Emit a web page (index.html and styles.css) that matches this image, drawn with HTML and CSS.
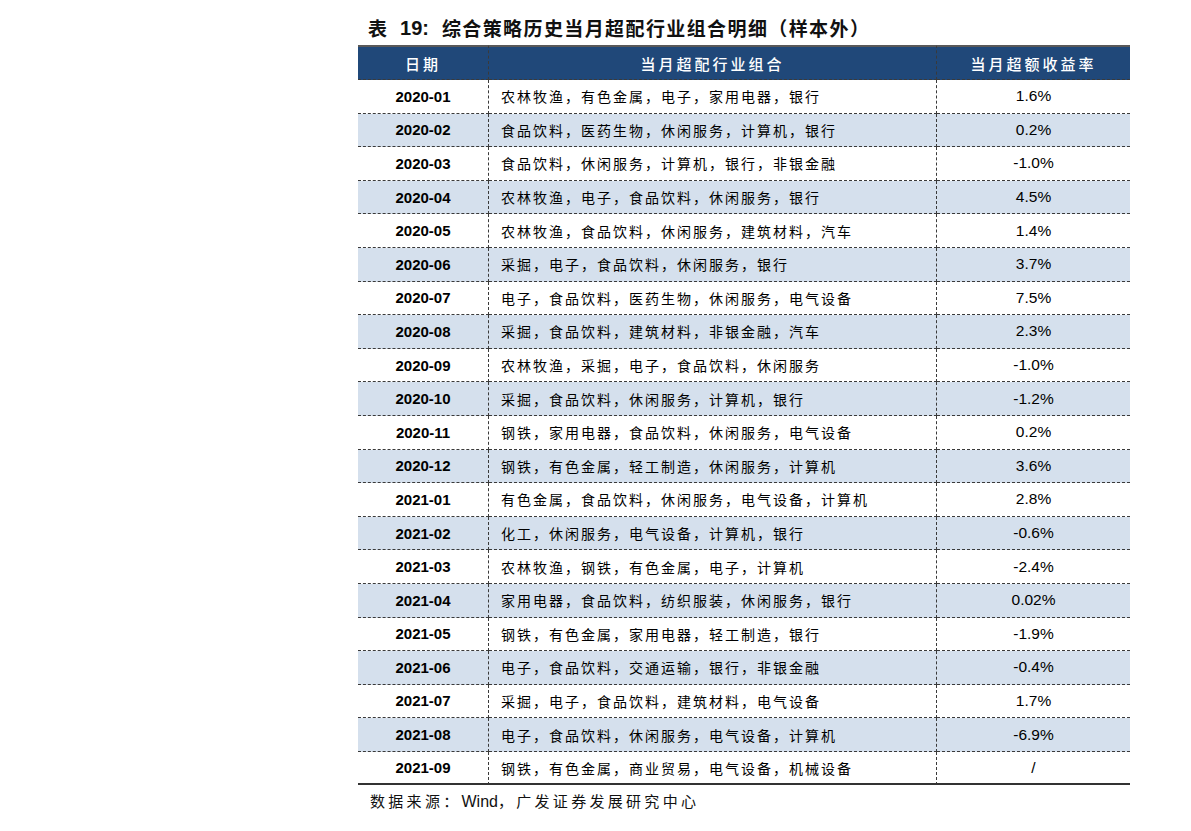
FILE: index.html
```html
<!DOCTYPE html>
<html lang="zh-CN">
<head>
<meta charset="utf-8">
<title>表 19</title>
<link rel="stylesheet" href="styles.css">
</head>
<body>
<div class="page">
  <div class="title"><span class="title-lead">表</span><span class="title-num">19:</span><span class="title-text">综合策略历史当月超配行业组合明细（样本外）</span></div>
  <table class="tbl">
    <thead>
      <tr>
        <th class="c-date">日期</th>
        <th class="c-combo">当月超配行业组合</th>
        <th class="c-ret">当月超额收益率</th>
      </tr>
    </thead>
    <tbody>
      <tr><td class="c-date">2020-01</td><td class="c-combo">农林牧渔，有色金属，电子，家用电器，银行</td><td class="c-ret">1.6%</td></tr>
      <tr><td class="c-date">2020-02</td><td class="c-combo">食品饮料，医药生物，休闲服务，计算机，银行</td><td class="c-ret">0.2%</td></tr>
      <tr><td class="c-date">2020-03</td><td class="c-combo">食品饮料，休闲服务，计算机，银行，非银金融</td><td class="c-ret">-1.0%</td></tr>
      <tr><td class="c-date">2020-04</td><td class="c-combo">农林牧渔，电子，食品饮料，休闲服务，银行</td><td class="c-ret">4.5%</td></tr>
      <tr><td class="c-date">2020-05</td><td class="c-combo">农林牧渔，食品饮料，休闲服务，建筑材料，汽车</td><td class="c-ret">1.4%</td></tr>
      <tr><td class="c-date">2020-06</td><td class="c-combo">采掘，电子，食品饮料，休闲服务，银行</td><td class="c-ret">3.7%</td></tr>
      <tr><td class="c-date">2020-07</td><td class="c-combo">电子，食品饮料，医药生物，休闲服务，电气设备</td><td class="c-ret">7.5%</td></tr>
      <tr><td class="c-date">2020-08</td><td class="c-combo">采掘，食品饮料，建筑材料，非银金融，汽车</td><td class="c-ret">2.3%</td></tr>
      <tr><td class="c-date">2020-09</td><td class="c-combo">农林牧渔，采掘，电子，食品饮料，休闲服务</td><td class="c-ret">-1.0%</td></tr>
      <tr><td class="c-date">2020-10</td><td class="c-combo">采掘，食品饮料，休闲服务，计算机，银行</td><td class="c-ret">-1.2%</td></tr>
      <tr><td class="c-date">2020-11</td><td class="c-combo">钢铁，家用电器，食品饮料，休闲服务，电气设备</td><td class="c-ret">0.2%</td></tr>
      <tr><td class="c-date">2020-12</td><td class="c-combo">钢铁，有色金属，轻工制造，休闲服务，计算机</td><td class="c-ret">3.6%</td></tr>
      <tr><td class="c-date">2021-01</td><td class="c-combo">有色金属，食品饮料，休闲服务，电气设备，计算机</td><td class="c-ret">2.8%</td></tr>
      <tr><td class="c-date">2021-02</td><td class="c-combo">化工，休闲服务，电气设备，计算机，银行</td><td class="c-ret">-0.6%</td></tr>
      <tr><td class="c-date">2021-03</td><td class="c-combo">农林牧渔，钢铁，有色金属，电子，计算机</td><td class="c-ret">-2.4%</td></tr>
      <tr><td class="c-date">2021-04</td><td class="c-combo">家用电器，食品饮料，纺织服装，休闲服务，银行</td><td class="c-ret">0.02%</td></tr>
      <tr><td class="c-date">2021-05</td><td class="c-combo">钢铁，有色金属，家用电器，轻工制造，银行</td><td class="c-ret">-1.9%</td></tr>
      <tr><td class="c-date">2021-06</td><td class="c-combo">电子，食品饮料，交通运输，银行，非银金融</td><td class="c-ret">-0.4%</td></tr>
      <tr><td class="c-date">2021-07</td><td class="c-combo">采掘，电子，食品饮料，建筑材料，电气设备</td><td class="c-ret">1.7%</td></tr>
      <tr><td class="c-date">2021-08</td><td class="c-combo">电子，食品饮料，休闲服务，电气设备，计算机</td><td class="c-ret">-6.9%</td></tr>
      <tr><td class="c-date">2021-09</td><td class="c-combo">钢铁，有色金属，商业贸易，电气设备，机械设备</td><td class="c-ret">/</td></tr>
    </tbody>
  </table>
  <div class="source">数据来源：<span class="latin">Wind</span>，广发证券发展研究中心</div>
</div>
</body>
</html>
```

FILE: styles.css
```css
html, body {
  margin: 0;
  padding: 0;
  background: #ffffff;
}

.page {
  padding: 15px 0 0 358px;
  width: 770px;
  font-family: "Noto Sans CJK SC", "Liberation Sans", sans-serif;
  color: #000;
}

.title {
  display: flex;
  align-items: center;
  height: 26px;
  line-height: 26px;
  margin: 0 0 4px 10px;
  font-size: 19px;
  font-weight: 700;
  white-space: nowrap;
  color: #111;
}

.title-lead {
  margin-right: 13px;
}

.title-num {
  font-family: "Liberation Sans", "Noto Sans CJK SC", sans-serif;
  font-weight: 700;
  font-size: 20px;
  margin-right: 13px;
}

.title-text {
  letter-spacing: 1.4px;
}

.tbl {
  width: 770px;
  border-collapse: separate;
  border-spacing: 0;
  table-layout: fixed;
}

.tbl th.c-date, .tbl td.c-date { width: 130px; }
.tbl th.c-combo, .tbl td.c-combo { width: 447px; }
.tbl th.c-ret, .tbl td.c-ret { width: 193px; }

.tbl thead tr {
  height: 35px;
}

.tbl th {
  background: #204879;
  color: #ffffff;
  font-weight: 500;
  font-size: 15px;
  letter-spacing: 3px;
  text-align: center;
  padding: 0;
  border-top: 2px solid #595959;
  border-bottom: 1px dashed #3a3a3a;
  vertical-align: middle;
}

.tbl th.c-date,
.tbl th.c-combo {
  border-right: 1px dashed #3a3a3a;
}

.tbl tbody tr {
  height: 33.6px;
}

.tbl tbody tr:nth-child(even) td {
  background: #d5e0ed;
}

.tbl td {
  padding: 0;
  border-bottom: 1px dashed #3a3a3a;
  vertical-align: middle;
  white-space: nowrap;
}

.tbl tbody tr:last-child td {
  border-bottom: 2px solid #333333;
}

.tbl td.c-date {
  border-right: 1px dashed #3a3a3a;
  text-align: center;
  font-family: "Liberation Sans", sans-serif;
  font-weight: 700;
  font-size: 15px;
}

.tbl td.c-combo {
  border-right: 1px dashed #3a3a3a;
  padding-left: 12px;
  font-size: 14px;
  letter-spacing: 2px;
}

.tbl td.c-ret {
  text-align: center;
  font-family: "Liberation Sans", sans-serif;
  font-size: 15.5px;
}

.source {
  margin: 4px 0 0 12px;
  line-height: 24px;
  font-size: 15px;
  letter-spacing: 3.3px;
  color: #111;
}

.source .latin {
  font-family: "Liberation Sans", sans-serif;
  letter-spacing: 0;
  font-size: 16px;
}
```
